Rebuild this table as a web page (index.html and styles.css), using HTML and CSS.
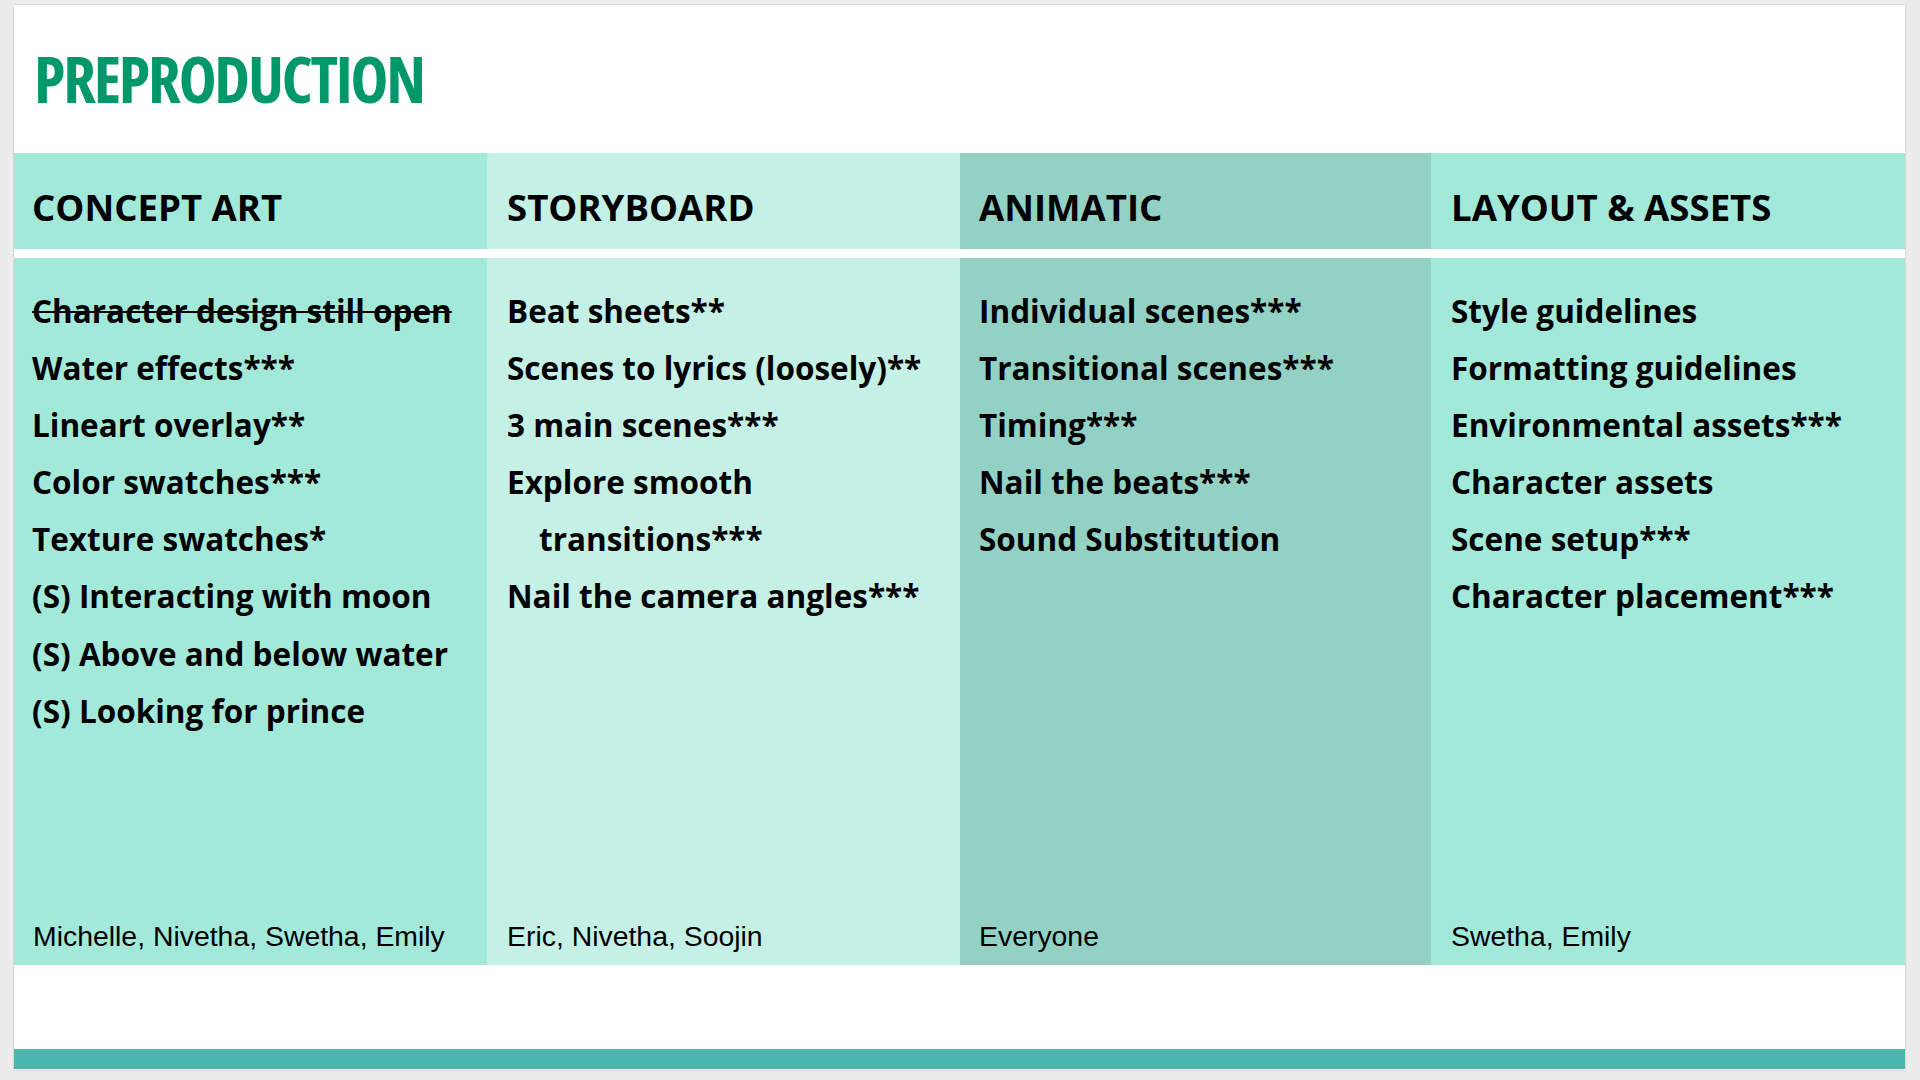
FILE: index.html
```html
<!DOCTYPE html>
<html lang="en">
<head>
<meta charset="utf-8">
<title>Preproduction</title>
<link rel="stylesheet" href="styles.css">
</head>
<body>
<div class="slide">
  <h1 class="title">PREPRODUCTION</h1>
  <div class="board">
    <div class="head c1">CONCEPT ART</div>
    <div class="head c2">STORYBOARD</div>
    <div class="head c3">ANIMATIC</div>
    <div class="head c4">LAYOUT &amp; ASSETS</div>

    <div class="cell c1">
      <ul class="tasks">
        <li class="done">Character design still open</li>
        <li>Water effects***</li>
        <li>Lineart overlay**</li>
        <li>Color swatches***</li>
        <li>Texture swatches*</li>
        <li>(S) Interacting with moon</li>
        <li>(S) Above and below water</li>
        <li>(S) Looking for prince</li>
      </ul>
      <div class="people">Michelle, Nivetha, Swetha, Emily</div>
    </div>
    <div class="cell c2">
      <ul class="tasks">
        <li>Beat sheets**</li>
        <li>Scenes to lyrics (loosely)**</li>
        <li>3 main scenes***</li>
        <li>Explore smooth</li>
        <li class="indent">transitions***</li>
        <li>Nail the camera angles***</li>
      </ul>
      <div class="people">Eric, Nivetha, Soojin</div>
    </div>
    <div class="cell c3">
      <ul class="tasks">
        <li>Individual scenes***</li>
        <li>Transitional scenes***</li>
        <li>Timing***</li>
        <li>Nail the beats***</li>
        <li>Sound Substitution</li>
      </ul>
      <div class="people">Everyone</div>
    </div>
    <div class="cell c4">
      <ul class="tasks">
        <li>Style guidelines</li>
        <li>Formatting guidelines</li>
        <li>Environmental assets***</li>
        <li>Character assets</li>
        <li>Scene setup***</li>
        <li>Character placement***</li>
      </ul>
      <div class="people">Swetha, Emily</div>
    </div>
  </div>
  <div class="footer-space"></div>
  <div class="bar"></div>
</div>
</body>
</html>
```

FILE: styles.css
```css
html, body {
  margin: 0;
  padding: 0;
  background: #ececec;
}

body {
  width: 1920px;
  height: 1080px;
  overflow: hidden;
}

.slide {
  margin: 5px 0 0 14px;
  width: 1891px;
  height: 1065px;
  background: #ffffff;
  box-shadow: 0 0 2px rgba(0, 0, 0, 0.25);
  display: flex;
  flex-direction: column;
}

.title {
  margin: 0;
  height: 148px;
  box-sizing: border-box;
  padding: 42px 0 0 20px;
  font-family: "Open Sans", sans-serif;
  font-stretch: 75%;
  font-weight: 700;
  font-size: 64px;
  line-height: 1;
  color: #00986a;
  letter-spacing: -2.2px;
}

.board {
  display: grid;
  grid-template-columns: 473px 473px 471px 474px;
  grid-template-rows: 96px 707px;
  row-gap: 9px;
  background: #ffffff;
}

.c1, .c4 { background: #a3e9da; }
.c2 { background: #c5f0e6; }
.c3 { background: #93d1c5; }

.head {
  box-sizing: border-box;
  padding: 33px 0 0 18px;
  font-family: "Open Sans", sans-serif;
  font-weight: 700;
  font-size: 36.6px;
  line-height: 42px;
  color: #000;
}

.c2.head, .c2 .tasks, .c2 .people { padding-left: 20px; }
.c3.head, .c3 .tasks, .c3 .people { padding-left: 19px; }
.c4.head, .c4 .tasks, .c4 .people { padding-left: 20px; }

.cell {
  display: flex;
  flex-direction: column;
  box-sizing: border-box;
  padding: 24px 0 15px 0;
}

.tasks {
  list-style: none;
  margin: 0;
  padding: 0 0 0 18px;
  font-family: "Open Sans", sans-serif;
  font-weight: 700;
  font-size: 31.5px;
  line-height: 57.1px;
  color: #000;
}

.tasks li { white-space: nowrap; }

.done { text-decoration: line-through; text-decoration-thickness: 2px; }

.indent { padding-left: 32px; }

.people {
  margin-top: auto;
  padding-left: 19px;
  font-family: "Liberation Sans", Arial, sans-serif;
  font-size: 28.4px;
  line-height: 28px;
  color: #000;
}

.footer-space {
  height: 84px;
}

.bar {
  height: 20px;
  background: #4db6ac;
}
```
